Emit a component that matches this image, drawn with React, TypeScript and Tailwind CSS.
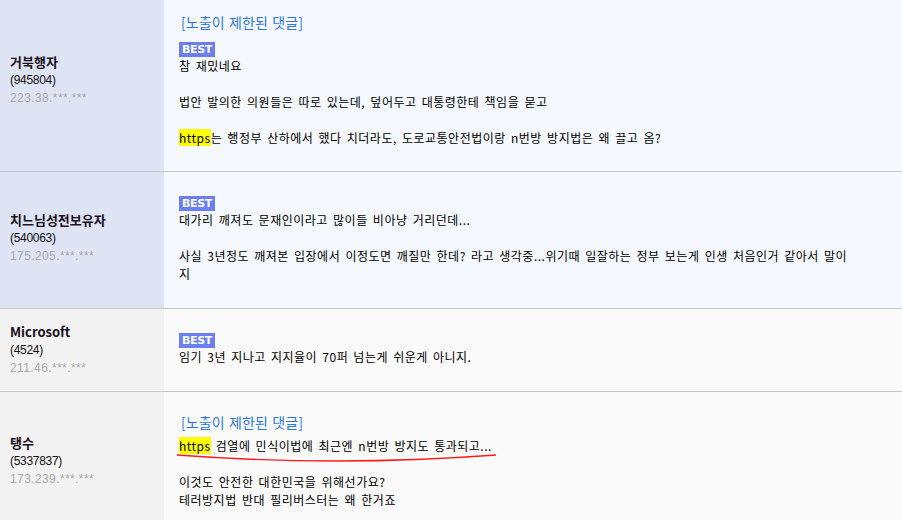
import React from 'react';

const KR = { fontFamily: '"Noto Sans CJK KR", "Liberation Sans", sans-serif' };

interface Author {
  name: string;
  num: string;
  ip: string;
}

const Best = () => (
  <div className="w-[36px] h-[15px] bg-[#6c7ff0] text-white text-[11px] font-bold leading-[15px] text-center font-['DejaVu_Sans',sans-serif] tracking-[-0.3px] [word-spacing:0]">
    BEST
  </div>
);

const Hl = ({ children }: { children: React.ReactNode }) => (
  <span className="bg-[#ffff00]">{children}</span>
);

const Blocked = () => (
  <div className="text-[14px] leading-[18px] text-[#2b77d9] pl-[2px] tracking-[0.1px] [word-spacing:1px]">[노출이 제한된 댓글]</div>
);

const Row = ({
  author,
  blue,
  lift = '',
  right,
}: {
  author: Author;
  blue?: boolean;
  lift?: string;
  right: React.ReactNode;
}) => (
  <div className="flex border-b border-[#c6c6c6]">
    <div
      className={`w-[164px] shrink-0 flex flex-col justify-center pl-[10px] ${lift} ${
        blue ? 'bg-[#dfe4f5]' : 'bg-[#f2f2f2]'
      }`}
    >
      <div className="text-[13px] font-bold leading-[18px] text-[#1a1020]">{author.name}</div>
      <div className="text-[12px] leading-[18px] text-[#111] font-['Liberation_Sans',sans-serif] tracking-[-0.3px]">
        {author.num}
      </div>
      <div className="text-[12px] leading-[18px] text-[#aaaaaa] font-['Liberation_Sans',sans-serif] tracking-[0.4px]">
        {author.ip}
      </div>
    </div>
    <div
      className={`flex-1 pl-[15px] pr-[10px] text-[12px] leading-[18px] text-black tracking-[0.5px] [word-spacing:2px] ${
        blue ? 'bg-[#f5f8fe]' : 'bg-[#fafafa]'
      }`}
    >
      {right}
    </div>
  </div>
);

export default function App() {
  return (
    <div className="w-[902px] h-[520px] overflow-hidden bg-[#fafafa]" style={KR}>
      <Row
        blue
        lift="pb-[11px]"
        author={{ name: '거북행자', num: '(945804)', ip: '223.38.***.***' }}
        right={
          <div className="pt-[13px] pb-[24px]">
            <Blocked />
            <div className="mt-[11px]">
              <Best />
            </div>
            <div>참 재밌네요</div>
            <div className="h-[18px]" />
            <div>법안 발의한 의원들은 따로 있는데, 덮어두고 대통령한테 책임을 묻고</div>
            <div className="h-[18px]" />
            <div>
              <Hl>https</Hl>는 행정부 산하에서 했다 치더라도, 도로교통안전법이랑 n번방 방지법은 왜 끌고 옴?
            </div>
          </div>
        }
      />
      <Row
        blue
        lift="pb-[5px]"
        author={{ name: '치느님성전보유자', num: '(540063)', ip: '175.205.***.***' }}
        right={
          <div className="pt-[24px] pb-[25px]">
            <Best />
            <div>대가리 깨져도 문재인이라고 많이들 비아냥 거리던데...</div>
            <div className="h-[18px]" />
            <div>
              사실 3년정도 깨져본 입장에서 이정도면 깨질만 한데? 라고 생각중...위기때 일잘하는 정부 보는게 인생 처음인거 같아서 말이
              <br />
              지
            </div>
          </div>
        }
      />
      <Row
        author={{ name: 'Microsoft', num: '(4524)', ip: '211.46.***.***' }}
        right={
          <div className="pt-[24px] pb-[25px]">
            <Best />
            <div>임기 3년 지나고 지지율이 70퍼 넘는게 쉬운게 아니지.</div>
          </div>
        }
      />
      <Row
        author={{ name: '탱수', num: '(5337837)', ip: '173.239.***.***' }}
        right={
          <div className="pt-[21px] pb-[21px]">
            <Blocked />
            <div className="mt-[6px]">
              <span className="relative inline-block">
                <Hl>https</Hl> 검열에 민식이법에 최근엔 n번방 방지도 통과되고...
                <svg
                  className="absolute left-[-3px] top-[14px] overflow-visible"
                  width="322"
                  height="14"
                  viewBox="0 0 322 14"
                >
                  <path d="M1 4 Q 160 16 320 4" fill="none" stroke="#ff1a1a" strokeWidth="1.3" />
                </svg>
              </span>
            </div>
            <div className="h-[18px]" />
            <div>이것도 안전한 대한민국을 위해선가요?</div>
            <div>테러방지법 반대 필리버스터는 왜 한거죠</div>
          </div>
        }
      />
    </div>
  );
}
